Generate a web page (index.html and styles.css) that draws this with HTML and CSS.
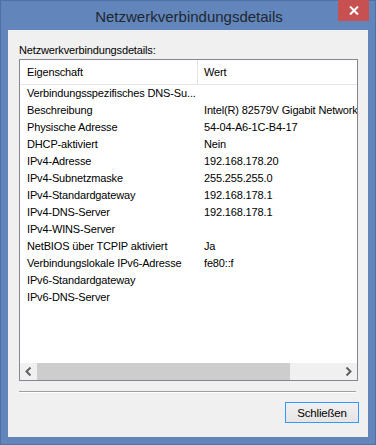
FILE: index.html
```html
<!DOCTYPE html>
<html lang="de">
<head>
  <meta charset="UTF-8" />
  <title>Netzwerkverbindungsdetails</title>
  <link rel="stylesheet" href="styles.css">
</head>
<body>

<div class="window">
  <div class="titlebar">
    <span class="title">Netzwerkverbindungsdetails</span>
    <div class="close">
      <svg width="10" height="9" viewBox="0 0 10 9">
        <path d="M1 0.5 L9 8.5 M9 0.5 L1 8.5" stroke="#fff" stroke-width="2" />
      </svg>
    </div>
  </div>

  <div class="client">
    <div class="label">Netzwerkverbindungsdetails:</div>

    <div class="listview">
      <div class="head">
        <div class="col1">Eigenschaft</div>
        <div class="col2">Wert</div>
      </div>

      <div class="rows">
        <div class="row"><div class="col1">Verbindungsspezifisches DNS-Su...</div><div class="col2"></div></div>
        <div class="row"><div class="col1">Beschreibung</div><div class="col2">Intel(R) 82579V Gigabit Network</div></div>
        <div class="row"><div class="col1">Physische Adresse</div><div class="col2">54-04-A6-1C-B4-17</div></div>
        <div class="row"><div class="col1">DHCP-aktiviert</div><div class="col2">Nein</div></div>
        <div class="row"><div class="col1">IPv4-Adresse</div><div class="col2">192.168.178.20</div></div>
        <div class="row"><div class="col1">IPv4-Subnetzmaske</div><div class="col2">255.255.255.0</div></div>
        <div class="row"><div class="col1">IPv4-Standardgateway</div><div class="col2">192.168.178.1</div></div>
        <div class="row"><div class="col1">IPv4-DNS-Server</div><div class="col2">192.168.178.1</div></div>
        <div class="row"><div class="col1">IPv4-WINS-Server</div><div class="col2"></div></div>
        <div class="row"><div class="col1">NetBIOS über TCPIP aktiviert</div><div class="col2">Ja</div></div>
        <div class="row"><div class="col1">Verbindungslokale IPv6-Adresse</div><div class="col2">fe80::f</div></div>
        <div class="row"><div class="col1">IPv6-Standardgateway</div><div class="col2"></div></div>
        <div class="row"><div class="col1">IPv6-DNS-Server</div><div class="col2"></div></div>
      </div>

      <!-- horizontal scrollbar -->
      <div class="hscroll">
        <div class="arrow">
          <svg width="7" height="9" viewBox="0 0 7 9"><path d="M5.5 0.5 L1.5 4.5 L5.5 8.5" fill="none" stroke="#606060" stroke-width="2" /></svg>
        </div>
        <div class="track"><div class="thumb"></div></div>
        <div class="arrow">
          <svg width="7" height="9" viewBox="0 0 7 9"><path d="M1.5 0.5 L5.5 4.5 L1.5 8.5" fill="none" stroke="#606060" stroke-width="2" /></svg>
        </div>
      </div>
    </div>

    <div class="separator"></div>

    <div class="buttons">
      <button>Schließen</button>
    </div>
  </div>
</div>

</body>
</html>
```

FILE: styles.css
```css
* {
  margin: 0;
  padding: 0;
  box-sizing: border-box;
}

body, html {
  width: 376px;
  height: 445px;
  overflow: hidden;
  font-family: "Liberation Sans", Arial, sans-serif;
  font-size: 11px;
  letter-spacing: -0.15px;
  color: #000;
}

.window {
  width: 376px;
  height: 445px;
  background: #6286bb;
  border: 1px solid #4f72a6;
  display: flex;
  flex-direction: column;
}

.titlebar {
  height: 29px;
  position: relative;
  display: flex;
  justify-content: center;
  align-items: center;
}

.title {
  font-size: 15px;
  letter-spacing: 0;
  color: #1f2630;
  margin-top: 1px;
  margin-left: 2px;
}

.close {
  position: absolute;
  top: -1px;
  right: 6px;
  width: 31px;
  height: 21px;
  background: #c75050;
  display: flex;
  justify-content: center;
  align-items: center;
}

.client {
  margin: 0 7px 7px 7px;
  flex: 1;
  background: #f0f0f0;
  padding: 11px 10px 0 11px;
  display: flex;
  flex-direction: column;
}

.label {
  height: 18px;
  line-height: 18px;
}

.listview {
  width: 339px;
  height: 322px;
  background: #fff;
  border: 1px solid #828790;
  display: flex;
  flex-direction: column;
  overflow: hidden;
}

.head {
  height: 25px;
  display: flex;
  border-bottom: 1px solid #e5e5e5;
  line-height: 24px;
}

.head .col1 {
  border-right: 1px solid #e5e5e5;
}

.col1 {
  width: 178px;
  flex-shrink: 0;
  padding-left: 7px;
  white-space: nowrap;
  overflow: hidden;
}

.col2 {
  padding-left: 6px;
  white-space: nowrap;
}

.rows {
  flex: 1;
}

.row {
  height: 17px;
  line-height: 17px;
  display: flex;
}

.hscroll {
  height: 17px;
  background: #f0f0f0;
  display: flex;
}

.arrow {
  width: 17px;
  display: flex;
  justify-content: center;
  align-items: center;
}

.track {
  flex: 1;
}

.thumb {
  width: 253px;
  height: 17px;
  background: #cdcdcd;
}

.separator {
  margin-top: 10px;
  width: 337px;
  height: 2px;
  border-top: 1px solid #a0a0a0;
  border-bottom: 1px solid #fff;
}

.buttons {
  display: flex;
  justify-content: flex-end;
  padding-top: 9px;
  width: 340px;
}

button {
  width: 74px;
  height: 21px;
  font-family: "Liberation Sans", Arial, sans-serif;
  font-size: 11.5px;
  letter-spacing: -0.2px;
  color: #000;
  border: 1px solid #3399ff;
  background: linear-gradient(to bottom, #f0f0f0, #e5e5e5);
}
```
